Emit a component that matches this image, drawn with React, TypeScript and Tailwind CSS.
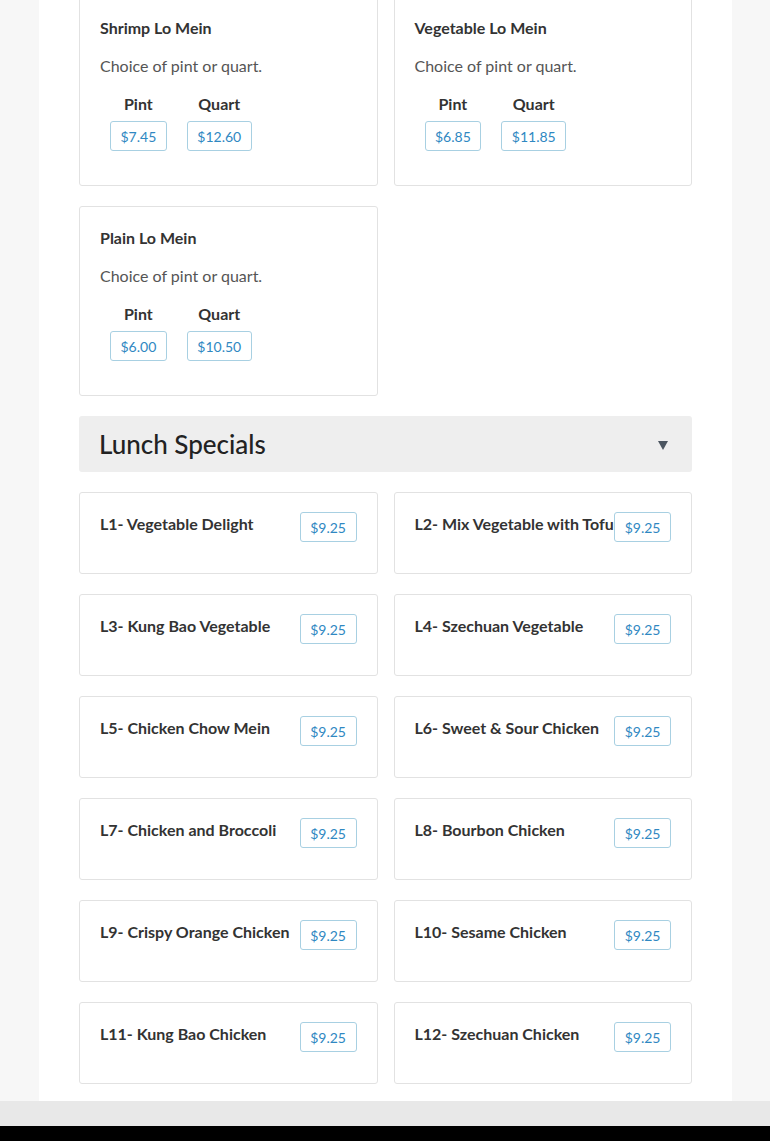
const LO_MEIN = [
  { name: "Shrimp Lo Mein", pint: "$7.45", quart: "$12.60" },
  { name: "Vegetable Lo Mein", pint: "$6.85", quart: "$11.85" },
  { name: "Plain Lo Mein", pint: "$6.00", quart: "$10.50" },
]

const LUNCH = [
  "L1- Vegetable Delight",
  "L2- Mix Vegetable with Tofu",
  "L3- Kung Bao Vegetable",
  "L4- Szechuan Vegetable",
  "L5- Chicken Chow Mein",
  "L6- Sweet & Sour Chicken",
  "L7- Chicken and Broccoli",
  "L8- Bourbon Chicken",
  "L9- Crispy Orange Chicken",
  "L10- Sesame Chicken",
  "L11- Kung Bao Chicken",
  "L12- Szechuan Chicken",
]

function Price({ value }: { value: string }) {
  return (
    <span className="inline-flex h-[30px] items-center justify-center rounded-[3px] border border-[#a8d0e2] bg-white px-[9.5px] text-[14px] text-[#2f88c2]">
      {value}
    </span>
  )
}

export default function App() {
  return (
    <div className="min-h-[1141px] bg-[#f7f7f7] font-['Lato','Liberation_Sans',sans-serif] text-[#333]">
      <div className="ml-[39px] w-[693px] overflow-hidden bg-white px-[40px] pb-[17px]">
        {/* Lo Mein cards */}
        <div className="-mt-[4px] grid grid-cols-2 gap-x-[16px] gap-y-[20px]">
          {LO_MEIN.map((item) => (
            <div key={item.name} className="rounded-[3px] border border-[#e2e2e2] px-[20px] pt-[19px] pb-[34px]">
              <h4 className="text-[16px] font-bold leading-[24px] text-[#333]">{item.name}</h4>
              <p className="mt-[14px] text-[16px] leading-[24px] text-[#555]">Choice of pint or quart.</p>
              <div className="mt-[14px] flex">
                <div className="flex flex-col items-center px-[10px]">
                  <span className="text-[16px] font-bold leading-[24px] text-[#333]">Pint</span>
                  <div className="mt-[5px]"><Price value={item.pint} /></div>
                </div>
                <div className="flex flex-col items-center px-[10px]">
                  <span className="text-[16px] font-bold leading-[24px] text-[#333]">Quart</span>
                  <div className="mt-[5px]"><Price value={item.quart} /></div>
                </div>
              </div>
            </div>
          ))}
        </div>

        {/* Section header */}
        <div className="mt-[20px] flex h-[56px] items-center justify-between rounded-[3px] bg-[#eeeeee] pl-[20px] pr-[24px]">
          <h2 className="text-[26px] font-medium text-[#222]">Lunch Specials</h2>
          <svg width="10" height="9" viewBox="0 0 10 9" className="mt-[2px]">
            <polygon points="0,0 10,0 5,9" fill="#4b5560" />
          </svg>
        </div>

        {/* Lunch cards */}
        <div className="mt-[20px] grid grid-cols-2 gap-x-[16px] gap-y-[20px]">
          {LUNCH.map((name) => (
            <div key={name} className="flex items-start justify-between rounded-[3px] border border-[#e2e2e2] px-[20px] pt-[19px] pb-[31px]">
              <h4 className="whitespace-nowrap text-[16px] font-bold leading-[24px] text-[#333]">{name}</h4>
              <Price value="$9.25" />
            </div>
          ))}
        </div>
      </div>
      <div className="h-[25px] bg-[#e8e8e8]" />
      <div className="h-[15px] bg-black" />
    </div>
  )
}
